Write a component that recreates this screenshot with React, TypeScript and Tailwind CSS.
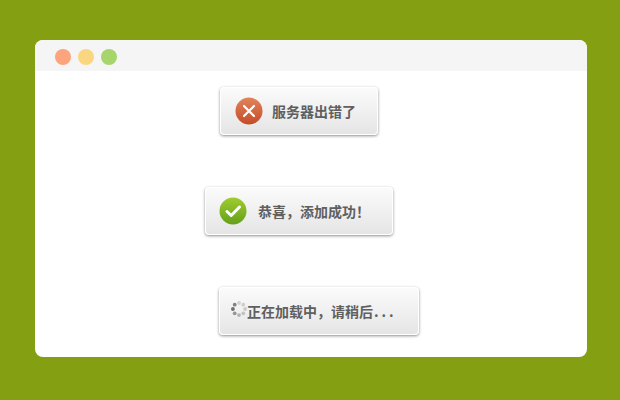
const font = { fontFamily: '"Noto Sans CJK SC", sans-serif' };

function ErrorIcon() {
  return (
    <svg width="28" height="28" viewBox="0 0 28 28" className="shrink-0">
      <defs>
        <linearGradient id="er" x1="0" y1="0" x2="0" y2="1">
          <stop offset="0" stopColor="#e2835c" />
          <stop offset="1" stopColor="#c44c28" />
        </linearGradient>
      </defs>
      <circle cx="14" cy="14" r="13.5" fill="url(#er)" />
      <path d="M9 9l10 10M19 9L9 19" stroke="#fff" strokeWidth="2.2" strokeLinecap="round" />
    </svg>
  );
}

function OkIcon() {
  return (
    <svg width="28" height="28" viewBox="0 0 28 28" className="shrink-0">
      <defs>
        <linearGradient id="ok" x1="0" y1="0" x2="0" y2="1">
          <stop offset="0" stopColor="#a0cc2e" />
          <stop offset="1" stopColor="#64a01a" />
        </linearGradient>
      </defs>
      <circle cx="14" cy="14" r="13.5" fill="url(#ok)" />
      <path d="M8 14.5l4.2 4L20.5 10" fill="none" stroke="#fff" strokeWidth="3" strokeLinecap="round" strokeLinejoin="round" />
    </svg>
  );
}

function Spinner() {
  const dots = [
    [8, 1.9, "#d2d2d2"],
    [12.3, 3.7, "#cecece"],
    [14.1, 8, "#cacaca"],
    [12.3, 12.3, "#c2c2c2"],
    [8, 14.1, "#b4b4b4"],
    [3.7, 12.3, "#969696"],
    [1.9, 8, "#707070"],
    [3.7, 3.7, "#828282"],
  ] as const;
  return (
    <svg width="16" height="16" viewBox="0 0 16 16" className="mb-1 shrink-0">
      {dots.map(([x, y, c], i) => (
        <circle key={i} cx={x} cy={y} r="1.9" fill={c} />
      ))}
    </svg>
  );
}

const btn =
  "flex h-12 items-center rounded-[4px] border border-white bg-gradient-to-b from-[#fbfbfb] to-[#e5e5e5] text-[14px] font-bold text-[#5f5f5f] shadow-[0_1px_3px_rgba(0,0,0,0.45)]";

export default function App() {
  return (
    <div className="h-[400px] w-[620px] bg-[#84a012] pl-[35px] pt-10" style={font}>
      <div className="h-[317px] w-[552px] overflow-hidden rounded-lg bg-white">
        <div className="flex h-[31px] items-center gap-[7px] bg-[#f5f5f5] pl-5 pt-[2px]">
          <span className="size-4 rounded-full bg-[#fca47c]" />
          <span className="size-4 rounded-full bg-[#fad680]" />
          <span className="size-4 rounded-full bg-[#a5d56b]" />
        </div>
        <div className="flex flex-col items-start pt-4">
          <div className={`${btn} ml-[185px] w-[158px] pl-[14px]`}>
            <ErrorIcon />
            <span className="ml-[9px]">服务器出错了</span>
          </div>
          <div className={`${btn} ml-[170px] mt-[52px] w-[188px] pl-[13px]`}>
            <OkIcon />
            <span className="ml-[11px]">恭喜，添加成功！</span>
          </div>
          <div className={`${btn} ml-[184px] mt-[52px] w-[200px] pl-[11px]`}>
            <Spinner />
            <span>
              正在加载中，请稍后<span className="ml-[1px] tracking-[3px]">...</span>
            </span>
          </div>
        </div>
      </div>
    </div>
  );
}
